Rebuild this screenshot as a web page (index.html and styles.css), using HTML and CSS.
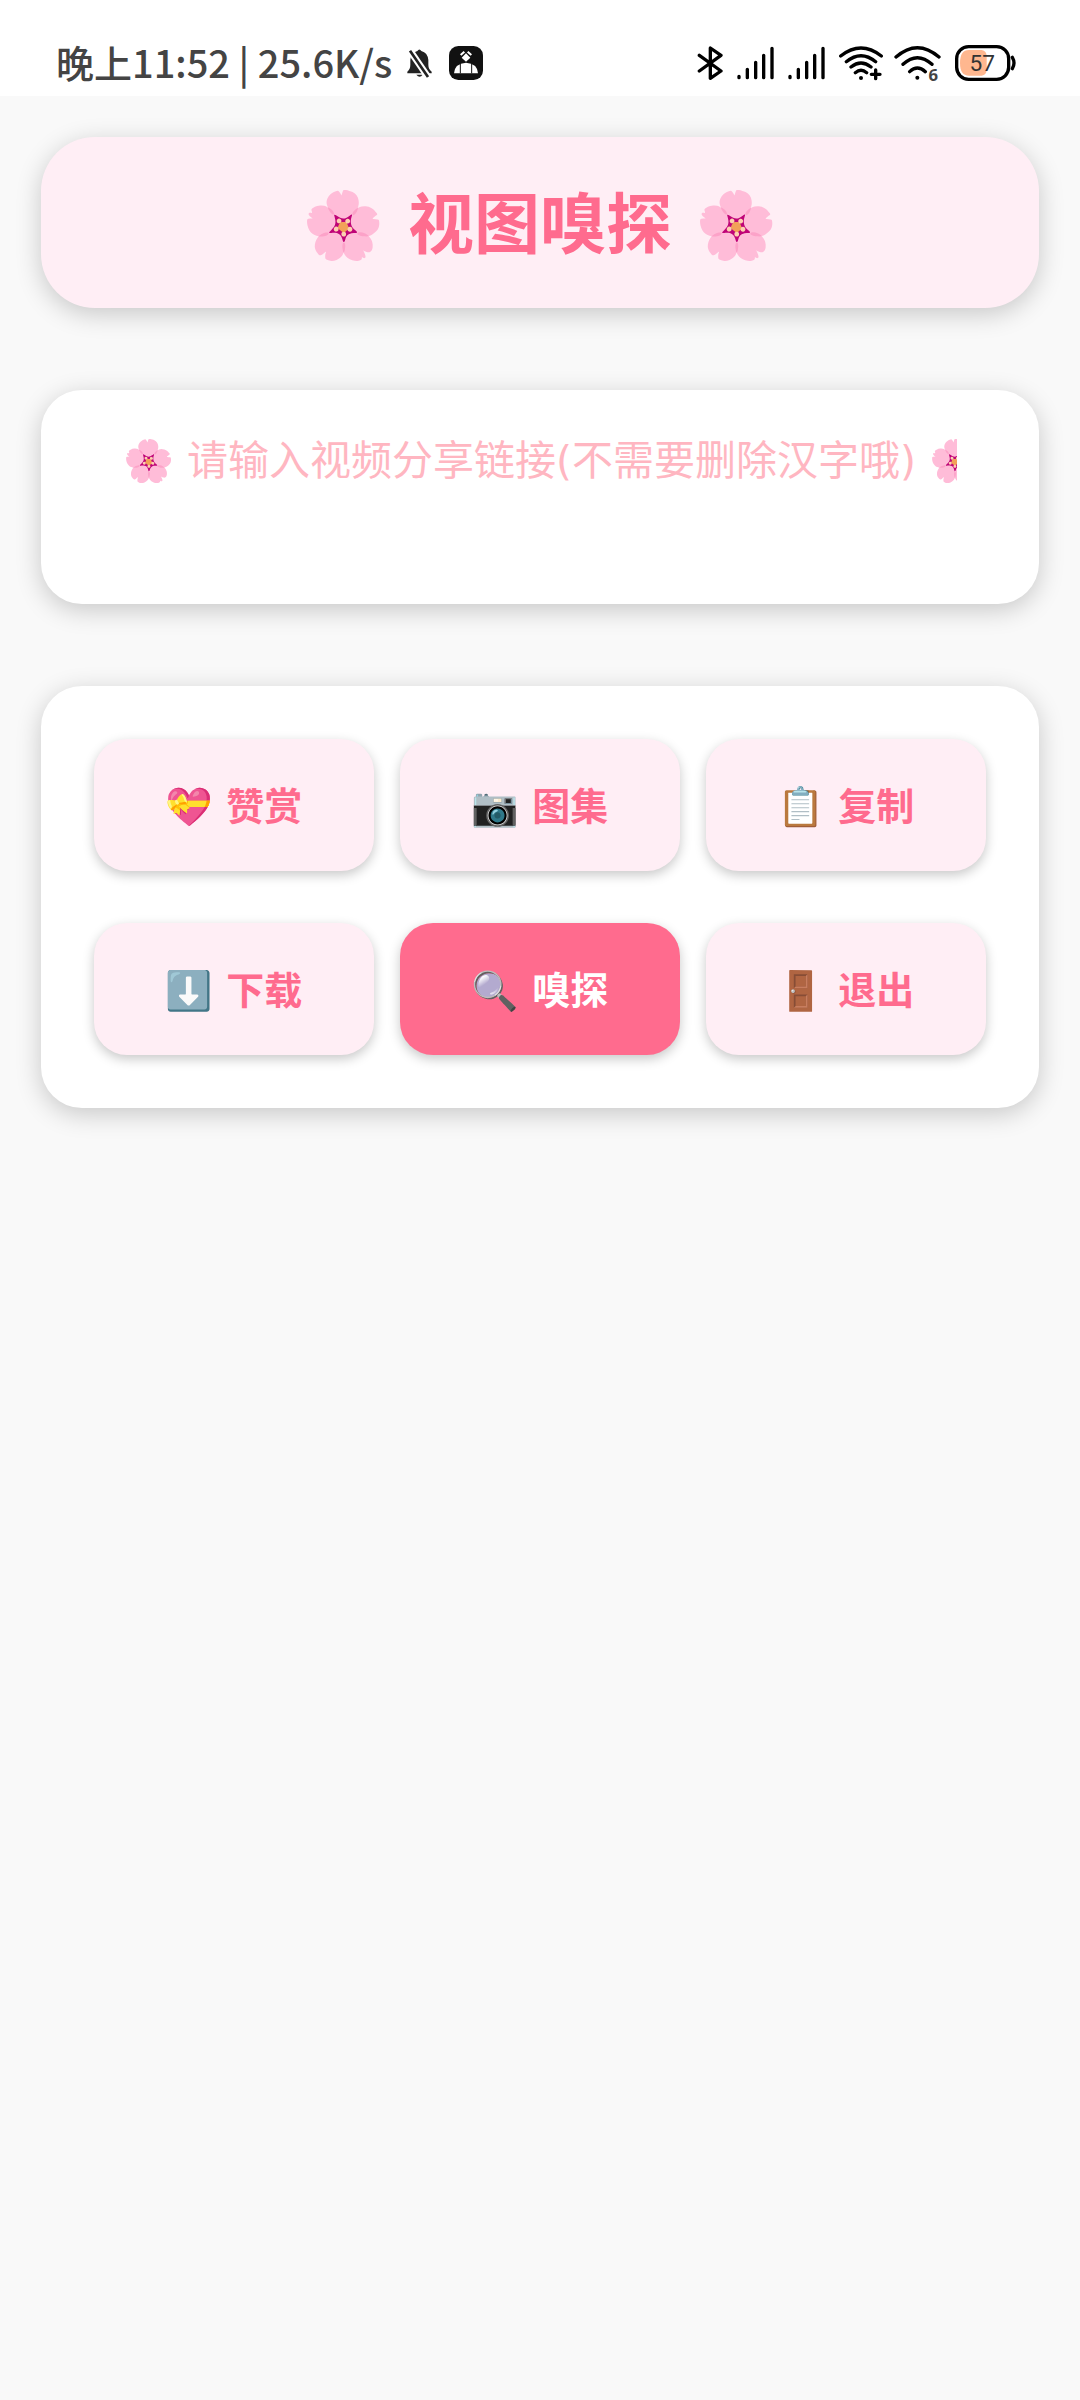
FILE: index.html
```html
<!DOCTYPE html>
<html lang="zh-CN">
<head>
    <meta charset="UTF-8">
    <meta name="viewport" content="width=device-width, initial-scale=1.0">
    <title>视图嗅探</title>
    <link rel="stylesheet" href="styles.css">
</head>
<body>
    <header class="status-bar">
        <div class="status-left">
            <span class="status-text">晚上11:52 | 25.6K/s</span>
            <svg class="icon-bell" viewBox="0 0 81 90" aria-hidden="true">
                <path d="M4 76 V71 Q13 63 13 50 V36 Q15 14 34 9 Q40 0 46 9 Q65 14 67 36 V50 Q67 63 77 71 V76 Z" fill="#222"/>
                <path d="M31 80 H50 Q41 92 31 80 Z" fill="#222"/>
                <path d="M8 2 L68 90" stroke="#fff" stroke-width="20"/>
                <path d="M12 8 L66 87" stroke="#222" stroke-width="8"/>
            </svg>
            <svg class="icon-app" viewBox="0 0 102 102" aria-hidden="true">
                <rect width="102" height="102" rx="28" fill="#111"/>
                <path d="M51 22 L64 35 L51 47 L38 35 Z" fill="#fff"/>
                <path d="M35 27 L46 17 M67 27 L56 17" stroke="#fff" stroke-width="6"/>
                <path d="M15 82 Q17 52 51 50 Q85 52 87 82 Z" fill="#fff"/>
                <path d="M34 52 V82 M68 52 V82" stroke="#111" stroke-width="3"/>
            </svg>
        </div>
        <div class="status-right">
            <svg class="icon-bt" viewBox="0 0 78 108" aria-hidden="true">
                <path class="line" d="M7 31 L72 78 L40 100 V9 L72 31 L7 78"/>
            </svg>
            <svg class="icon-signal" viewBox="0 0 111 108" aria-hidden="true">
                <path class="line" d="M6 94 V98 M31 73 V98 M56 52 V98 M80 31 V98 M105 10 V98"/>
            </svg>
            <svg class="icon-signal" viewBox="0 0 111 108" aria-hidden="true">
                <path class="line" d="M6 94 V98 M31 73 V98 M56 52 V98 M80 31 V98 M105 10 V98"/>
            </svg>
            <svg class="icon-wifi-plus" viewBox="0 0 132 108" aria-hidden="true">
                <path class="line" d="M5 33 Q66 -15 127 33 M22 50 Q66 14 110 50 M36 66 Q66 42 96 66 M49 83 Q66 69 83 83"/>
                <circle cx="66" cy="99" r="6"/>
                <path class="line" d="M110 75 V101 M97 88 H123"/>
            </svg>
            <svg class="icon-wifi" viewBox="0 0 141 108" aria-hidden="true">
                <path class="line" d="M6 36 Q70 -20 135 36 M27 58 Q70 18 114 58 M47 80 Q70 58 94 80"/>
                <circle cx="70" cy="98" r="6"/>
                <text class="wifi-gen" x="118" y="107">6</text>
            </svg>
            <svg class="icon-battery" viewBox="0 0 183 108" aria-hidden="true">
                <path d="M42 15 H80 Q95 17 95 35 V72 Q95 90 80 92 H42 Q15 92 15 54 Q15 15 42 15 Z" fill="#ffb78f"/>
                <rect class="line" x="5" y="5" width="156" height="98" rx="36"/>
                <path class="line" d="M172 37 Q182 54 172 71"/>
                <text class="battery-level" x="82" y="79">57</text>
            </svg>
        </div>
    </header>

    <main class="page">
        <h1 class="card title">🌸 视图嗅探 🌸</h1>

        <div class="card link-box">
            <input class="link-input" type="text" aria-label="视频分享链接" placeholder="🌸 请输入视频分享链接(不需要删除汉字哦) 🌸">
        </div>

        <div class="card actions">
            <button class="btn" type="button">💝 赞赏</button>
            <button class="btn" type="button">📷 图集</button>
            <button class="btn" type="button">📋 复制</button>
            <button class="btn" type="button">⬇️ 下载</button>
            <button class="btn btn-primary" type="button">🔍 嗅探</button>
            <button class="btn" type="button">🚪 退出</button>
        </div>
    </main>
</body>
</html>
```
FILE: styles.css
```css
* {
    box-sizing: border-box;
}
body {
    margin: 0;
    min-height: 100vh;
    background-color: #f9f9f9;
    font-family: "DejaVu Sans", "Noto Sans CJK SC", "Noto Color Emoji", sans-serif;
}

/* status bar */
.status-bar {
    display: flex;
    justify-content: space-between;
    height: 96px;
    padding: 30px 64px 0 56px;
    background-color: #fff;
}
.status-left,
.status-right {
    display: flex;
    align-items: center;
    height: 66px;
}
.status-text {
    align-self: flex-start;
    font-family: "Noto Sans CJK SC", sans-serif;
    font-size: 38px;
    line-height: 63px;
    font-weight: 500;
    color: #444;
    white-space: pre;
}
.status-bar svg {
    display: block;
    flex: none;
    height: 36px;
}
.status-bar .icon-bell {
    width: 27px;
    height: 30px;
    margin-left: 14px;
}
.status-bar .icon-app {
    width: 34px;
    height: 34px;
    margin-left: 16px;
}
.icon-bt {
    width: 26px;
}
.icon-signal {
    width: 37px;
    margin-left: 14px;
}
.icon-wifi-plus {
    width: 44px;
    margin-left: 14px;
}
.icon-wifi {
    width: 47px;
    margin-left: 11px;
}
.icon-battery {
    width: 61px;
    margin-left: 14px;
}
.line {
    fill: none;
    stroke: #000;
    stroke-width: 10;
    stroke-linecap: round;
    stroke-linejoin: round;
}
.wifi-gen {
    font: bold 50px "Open Sans", sans-serif;
    fill: #444;
    text-anchor: middle;
}
.battery-level {
    font: 400 68px Roboto, sans-serif;
    fill: #333;
    text-anchor: middle;
}

/* cards */
.page {
    display: flex;
    flex-direction: column;
    gap: 82px;
    padding: 41px;
}
.card {
    margin: 0;
    border-radius: 41px;
    background-color: #fff;
    box-shadow: 0 6px 26px rgba(0, 0, 0, 0.2);
}
.title {
    padding: 44px 41px 38px;
    border-radius: 54px;
    background-color: #ffeef5;
    color: #ff6b8e;
    font-size: 66px;
    font-weight: bold;
    line-height: 89px;
    text-align: center;
}
.link-box {
    padding: 37px 82px 109px;
}
.link-input {
    display: block;
    width: 100%;
    height: 68px;
    padding: 0;
    border: none;
    outline: none;
    background: none;
    color: #ff6b8e;
    font-family: inherit;
    font-size: 41px;
}
.link-input::placeholder {
    color: #ffb6c1;
    opacity: 1;
}
.actions {
    display: grid;
    grid-template-columns: repeat(3, 1fr);
    gap: 52px 26px;
    padding: 53px;
}
.btn {
    height: 132px;
    padding: 0 0 4px;
    border: none;
    border-radius: 33px;
    background-color: #ffeef5;
    box-shadow: 0 4px 12px rgba(0, 0, 0, 0.22);
    color: #ff6b8e;
    font-family: inherit;
    font-size: 38px;
    font-weight: bold;
    cursor: pointer;
}
.btn-primary {
    background-color: #ff6b8e;
    color: #fff;
}
```
